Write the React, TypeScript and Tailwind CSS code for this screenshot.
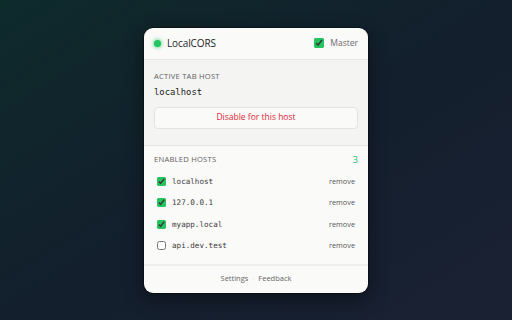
import { useState } from 'react';

const hosts = [
  { name: 'localhost', on: true },
  { name: '127.0.0.1', on: true },
  { name: 'myapp.local', on: true },
  { name: 'api.dev.test', on: false },
];

const sans = "font-['Segoe_UI','Open_Sans','Noto_Sans',sans-serif]";
const mono = "font-['DejaVu_Sans_Mono','Liberation_Mono',monospace]";

export default function App() {
  const [master, setMaster] = useState(true);
  const [list, setList] = useState(hosts);

  return (
    <div className={`flex h-[320px] w-[512px] items-center justify-center bg-gradient-to-br from-[#0d2a2b] via-[#131f2d] to-[#1a2133] ${sans}`}>
      <div className="w-[224px] overflow-hidden rounded-[9px] bg-[#fafaf9] shadow-[0_0_0_1px_rgba(0,0,0,0.35),0_6px_20px_rgba(0,0,0,0.45)]">
        {/* Header */}
        <div className="flex h-[32px] items-center justify-between border-b border-[#e7e7e5] px-[10px]">
          <div className="flex items-center gap-[6px]">
            <span className="h-[7px] w-[7px] rounded-full bg-[#22c55e] shadow-[0_0_4px_#22c55e]" />
            <span className="text-[10px] leading-[12px] tracking-[-0.01em] text-[#1f1f1f]">LocalCORS</span>
          </div>
          <label className="flex items-center gap-[6px] text-[8.5px] text-[#6b6b6b]">
            <input
              type="checkbox"
              checked={master}
              onChange={() => setMaster(!master)}
              className="m-0 h-[10px] w-[10px] accent-[#22c55e]"
            />
            Master
          </label>
        </div>

        {/* Active tab */}
        <div className="border-b border-[#e4e4e2] bg-[#f4f4f3] px-[10px] pb-[16px] pt-[10px]">
          <div className="text-[7.6px] leading-[12px] uppercase tracking-[0.03em] text-[#5f5f5f]">Active tab host</div>
          <div className={`mt-[3px] text-[8.9px] leading-[14px] text-[#1c1c1c] ${mono}`}>localhost</div>
          <button className="mt-[8px] h-[22px] w-full rounded-[4px] border border-[#e3e3e1] bg-[#fafaf9] text-[8.5px] text-[#dc2638]">
            Disable for this host
          </button>
        </div>

        {/* Enabled hosts */}
        <div className="border-b-2 border-[#efefed] px-[10px] pb-[7px] pt-[9px]">
          <div className="flex h-[10px] items-center justify-between">
            <span className="text-[7.6px] uppercase tracking-[0.03em] text-[#5f5f5f]">Enabled hosts</span>
            <span className="text-[9px] text-[#22c55e]">3</span>
          </div>
          <div className="mt-[6px] flex flex-col">
            {list.map((h, i) => (
              <div key={h.name} className="flex h-[21.5px] items-center justify-between px-[3px]">
                <label className="flex items-center gap-[6px]">
                  <input
                    type="checkbox"
                    checked={h.on}
                    onChange={() => setList(list.map((x, j) => (j === i ? { ...x, on: !x.on } : x)))}
                    className="m-0 h-[9px] w-[9px] accent-[#22c55e]"
                  />
                  <span className={`text-[7.6px] text-[#3a3a3a] ${mono}`}>{h.name}</span>
                </label>
                <button className="text-[7.3px] text-[#555]">remove</button>
              </div>
            ))}
          </div>
        </div>

        {/* Footer */}
        <div className="flex h-[27px] items-center justify-center gap-[4px] text-[7.5px] text-[#666]">
          <span>Settings</span>
          <span className="text-[#ccc]">·</span>
          <span>Feedback</span>
        </div>
      </div>
    </div>
  );
}
